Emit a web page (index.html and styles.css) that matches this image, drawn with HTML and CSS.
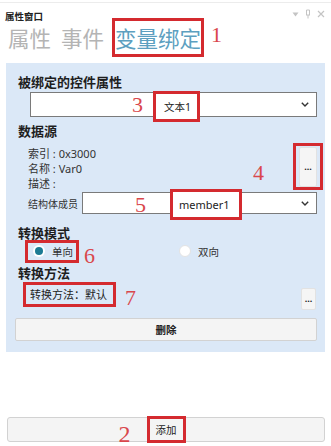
FILE: index.html
```html
<!DOCTYPE html>
<html lang="zh">
<head>
<meta charset="utf-8">
<title>属性窗口</title>
<link rel="stylesheet" href="styles.css">
</head>
<body>
<div class="win">
  <div class="titlebar">
    <span class="title">属性窗口</span>
    <span class="ctrls">
      <svg width="7" height="5" viewBox="0 0 7 5"><path d="M0.5 0.5 L6.5 0.5 L3.5 4.5 Z" fill="#c4c4c4"/></svg>
      <svg width="6" height="10" viewBox="0 0 6 10"><path d="M1.5 1 V6 M4.5 1 V6 M1 6 H5 M1.5 1 H4.5 M3 6 V9.5" stroke="#c4c4c4" stroke-width="1" fill="none"/></svg>
      <svg width="8" height="8" viewBox="0 0 8 8"><path d="M1 1 L7 7 M7 1 L1 7" stroke="#c4c4c4" stroke-width="1.2"/></svg>
    </span>
  </div>
  <div class="tabs">
    <span class="tab">属性</span>
    <span class="tab">事件</span>
    <span class="tab active">变量绑定</span>
    <span class="num num-1">1</span>
  </div>

  <div class="panel">
    <div class="heading">被绑定的控件属性</div>
    <div class="combo combo-prop">
      <span class="num num-3">3</span>
      <span class="combo-text mark mark-prop">文本1</span>
      <svg class="chev" width="8" height="5" viewBox="0 0 8 5"><path d="M0.8 0.8 L4 4 L7.2 0.8" stroke="#333" stroke-width="1.4" fill="none"/></svg>
    </div>

    <div class="heading heading-src">数据源</div>
    <div class="src">
      <div class="info">
        <div>索引 : 0x3000</div>
        <div>名称 : Var0</div>
        <div>描述 :</div>
      </div>
      <span class="num num-4">4</span>
      <div class="mark-dots">
        <button class="dots dots-tall">...</button>
      </div>
    </div>

    <div class="member">
      <span class="member-label">结构体成员</span>
      <div class="combo combo-member">
        <span class="num num-5">5</span>
        <span class="combo-text mark mark-member">member1</span>
        <svg class="chev" width="8" height="5" viewBox="0 0 8 5"><path d="M0.8 0.8 L4 4 L7.2 0.8" stroke="#333" stroke-width="1.4" fill="none"/></svg>
      </div>
    </div>

    <div class="heading heading-mode">转换模式</div>
    <div class="radios">
      <span class="radio-opt mark mark-radio">
        <span class="radio checked"></span>
        <span class="radio-label">单向</span>
      </span>
      <span class="num num-6">6</span>
      <span class="radio-opt second">
        <span class="radio"></span>
        <span class="radio-label">双向</span>
      </span>
    </div>

    <div class="heading heading-method">转换方法</div>
    <div class="method">
      <span class="mark mark-method">转换方法：默认</span>
      <span class="num num-7">7</span>
      <button class="dots dots-small">...</button>
    </div>

    <button class="btn btn-del">删除</button>
  </div>

  <div class="spacer"></div>

  <button class="btn btn-add">
    <span class="num num-2">2</span>
    <span class="mark mark-add">添加</span>
  </button>
</div>
</body>
</html>
```

FILE: styles.css
```css
* {
  box-sizing: border-box;
}

html, body {
  margin: 0;
  padding: 0;
  background: #ffffff;
}

body {
  font-family: "Noto Sans", "Noto Sans CJK SC", sans-serif;
  color: #222;
}

.win {
  width: 331px;
  display: flex;
  flex-direction: column;
  border-top: 1px solid #ececec;
  margin-top: 2px;
  height: 444px;
}

.titlebar {
  height: 19px;
  display: flex;
  align-items: flex-end;
  justify-content: space-between;
  padding: 0 6px 0 5px;
  font-size: 9.5px;
  line-height: 12px;
}

.title {
  font-family: "Noto Sans CJK SC", sans-serif;
  font-weight: bold;
  color: #222;
}

.ctrls {
  display: flex;
  align-items: center;
  gap: 6px;
  height: 12px;
  margin-bottom: 2px;
}

.tabs {
  display: flex;
  align-items: center;
  height: 39px;
  margin-top: -4px;
  padding-left: 8px;
  font-family: "Noto Sans CJK SC", sans-serif;
  font-size: 21.5px;
}

.tab {
  color: #b4b4b4;
  line-height: 33px;
  margin-right: 10px;
}

.tab.active {
  color: #5d9fc0;
  border: 3px solid #d42a2f;
  margin-left: -2px;
  margin-right: 0;
  line-height: 33px;
}

.num {
  font-family: "Liberation Serif", serif;
  color: #d9474c;
  font-size: 22px;
  line-height: 20px;
}

.num-1 {
  margin-left: 7px;
  margin-top: -5px;
}

.panel {
  margin: 6px 6px 0 6px;
  background: #dbe8f7;
  padding: 10px 8px 11px 9px;
  display: flex;
  flex-direction: column;
}

.heading {
  font-family: "Noto Sans CJK SC", sans-serif;
  font-weight: bold;
  font-size: 13px;
  line-height: 18px;
  margin-left: 3px;
  color: #1e1e1e;
}

.heading-src {
  margin-top: 5px;
}

.heading-mode {
  margin-top: 10px;
}

.heading-method {
  margin-top: 4px;
}

.combo {
  display: flex;
  align-items: center;
  background: #ffffff;
  border: 1px solid #7a7a7a;
  font-size: 10.5px;
}

.combo-prop {
  height: 25px;
  margin-top: 1px;
  margin-left: 15px;
}

.num-3 {
  margin-left: 101px;
}

.mark {
  outline: 3px solid #d42a2f;
}

.combo-text {
  display: inline-flex;
  align-items: center;
  color: #222;
}

.mark-prop {
  height: 25px;
  margin-left: 13px;
  padding: 0 6px 0 8px;
  margin-top: 3px;
  background: #fff;
}

.chev {
  margin-left: auto;
  margin-right: 7px;
}

.src {
  display: flex;
  align-items: flex-start;
  margin-top: 6px;
  height: 45px;
}

.info {
  margin-left: 13px;
  font-size: 11px;
  line-height: 15px;
  color: #333;
}

.num-4 {
  margin-left: 157px;
  margin-top: 17px;
}

.mark-dots {
  margin-left: auto;
  margin-right: -6px;
  margin-top: -3px;
  border: 3px solid #d42a2f;
  padding: 1px 3px 0 3px;
  height: 47px;
}

.dots {
  font-family: "Noto Sans", sans-serif;
  background: #f5f5f5;
  border: 1px solid #e2e2e2;
  border-radius: 2px;
  color: #222;
  font-size: 9px;
  line-height: 8px;
  padding: 0;
  font-weight: bold;
}

.dots-tall {
  width: 18px;
  height: 40px;
  display: block;
}

.member {
  display: flex;
  align-items: center;
  margin-top: 1px;
}

.member-label {
  margin-left: 13px;
  font-size: 10px;
  color: #333;
  width: 54px;
}

.combo-member {
  flex: 1;
  height: 22px;
}

.num-5 {
  margin-left: 52px;
  margin-top: 4px;
}

.mark-member {
  height: 25px;
  margin-left: 27px;
  padding: 0 9px 0 6px;
  margin-top: 3px;
  font-size: 11px;
  background: #fff;
}

.radios {
  display: flex;
  align-items: center;
  height: 18px;
}

.radio-opt {
  display: inline-flex;
  align-items: center;
}

.mark-radio {
  margin-left: 13px;
  height: 17px;
  padding: 0 3px 0 5px;
}

.radio {
  width: 12px;
  height: 12px;
  border-radius: 50%;
  background: #ffffff;
  border: 1px solid #e3e3e3;
  position: relative;
}

.radio.checked {
  border: none;
}

.radio.checked::after {
  content: "";
  position: absolute;
  left: 2px;
  top: 2px;
  width: 8px;
  height: 8px;
  border-radius: 50%;
  background: #1c7b94;
}

.radio-label {
  font-size: 10.5px;
  color: #333;
  margin-left: 7px;
}

.num-6 {
  margin-left: 8px;
  margin-top: 10px;
}

.second {
  margin-left: 84px;
}

.method {
  display: flex;
  align-items: flex-start;
  height: 28px;
}

.mark-method {
  outline: none;
  border: 3px solid #d42a2f;
  margin-left: 8px;
  height: 25px;
  padding: 0 6px 0 4px;
  font-size: 11px;
  line-height: 19px;
  color: #222;
}

.num-7 {
  margin-left: 9px;
  margin-top: 6px;
}

.dots-small {
  margin-left: auto;
  margin-right: 1px;
  margin-top: 6px;
  width: 15px;
  height: 22px;
}

.btn {
  font-family: "Noto Sans CJK SC", sans-serif;
  background: #f4f4f4;
  border: 1px solid #d2d2d2;
  border-radius: 2px;
  color: #222;
  font-size: 10.5px;
  padding: 0;
}

.btn-del {
  margin-top: 8px;
  height: 23px;
  font-weight: bold;
}

.spacer {
  flex: 1;
}

.btn-add {
  margin: 0 6px 4px 7px;
  height: 25px;
  display: flex;
  align-items: center;
  justify-content: center;
  border-radius: 3px;
}

.num-2 {
  margin-right: 16px;
  margin-left: -28px;
  margin-top: 8px;
  font-size: 24px;
}

.mark-add {
  border: 3px solid #d42a2f;
  outline: none;
  height: 27px;
  line-height: 21px;
  padding: 0 6px;
  margin-top: -1px;
}
```
